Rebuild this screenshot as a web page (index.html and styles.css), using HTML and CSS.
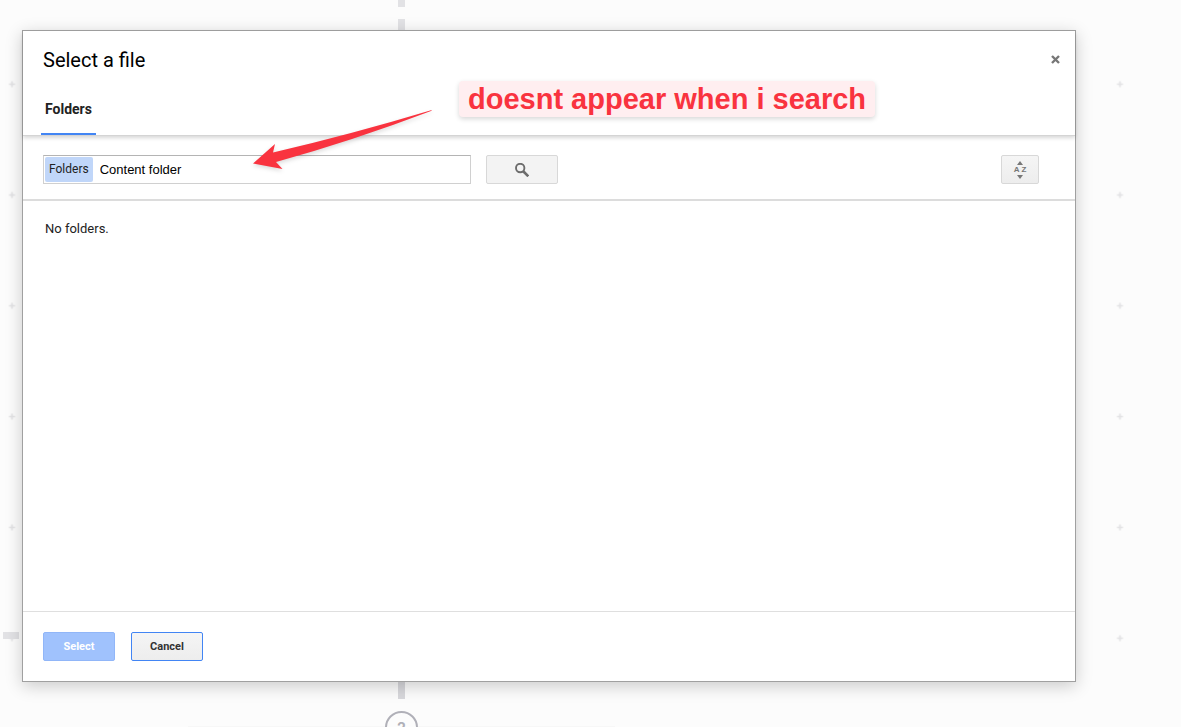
FILE: index.html
```html
<!DOCTYPE html>
<html lang="en">

<head>
  <meta charset="UTF-8">
  <meta name="viewport" content="width=device-width, initial-scale=1.0">
  <title>Select a file</title>
  <link rel="stylesheet" href="styles.css">
</head>

<body>

  <!-- workflow canvas behind the dialog -->
  <div class="canvas">
    <svg class="grid" width="100%" height="100%" aria-hidden="true">
      <defs>
        <pattern id="plus" x="-43.4" y="28.8" width="110.8" height="110.8" patternUnits="userSpaceOnUse">
          <path d="M52.4 55.4h6M55.4 52.4v6" stroke="#e2e2e4" stroke-width="1.6" />
        </pattern>
      </defs>
      <rect width="100%" height="100%" fill="url(#plus)" />
    </svg>
    <div class="dash dash-top"></div>
    <div class="dash dash-upper"></div>
    <div class="dash dash-lower"></div>
    <div class="dash dash-side"></div>
    <div class="step-card"></div>
    <div class="step">2</div>
  </div>

  <div class="dialog" role="dialog" aria-labelledby="dialogTitle">
    <div class="dialog-header">
      <div class="title-row">
        <h1 id="dialogTitle">Select a file</h1>
        <button class="close" aria-label="Close">
          <svg width="9" height="9" viewBox="0 0 9 9"><path d="M1 1l7 7M8 1l-7 7" stroke="#777" stroke-width="2.4" /></svg>
        </button>
      </div>
      <nav class="tabs">
        <a class="tab" href="#folders">Folders</a>
      </nav>
    </div>

    <div class="toolbar">
      <div class="search-box">
        <label class="chip" for="query">Folders</label>
        <input type="text" id="query" value="Content folder">
      </div>
      <button class="tool-btn search-btn" aria-label="Search">
        <svg width="14" height="14" viewBox="0 0 14 14" fill="none" stroke="#6c6c6c">
          <circle cx="5.200" cy="5" r="4.200" stroke-width="1.9" />
          <path d="M8 8l5.300 5.300" stroke-width="2.6" />
        </svg>
      </button>
      <button class="tool-btn sort-btn" aria-label="Sort">
        <svg width="6" height="4" viewBox="0 0 6 4"><path d="M0 4l3-4 3 4z" fill="#777" /></svg>
        <span>A Z</span>
        <svg width="6" height="4" viewBox="0 0 6 4"><path d="M0 0h6l-3 4z" fill="#777" /></svg>
      </button>
    </div>

    <div class="results" id="folders">No folders.</div>

    <div class="dialog-footer">
      <button class="btn btn-select" disabled>Select</button>
      <button class="btn btn-cancel">Cancel</button>
    </div>

    <!-- annotation -->
    <svg class="arrow" width="190" height="66" viewBox="0 0 190 66" aria-hidden="true">
      <path d="M5 58.500L27 39l-2 8.500Q104 29 183 5.200q2 .3 0 .8Q104 36 28 57l6.500 7Z" fill="#f9333f" />
    </svg>
    <div class="note">doesnt appear when i search</div>
  </div>

</body>

</html>
```
FILE: styles.css
```css
* {
  box-sizing: border-box;
}

body {
  margin: 0;
  min-height: 100vh;
  padding: 30px 105px 45px 22px;
  display: flex;
  background: #fcfcfc;
  font-family: Roboto, Arial, sans-serif;
  font-size: 13px;
  color: #222;
}

button,
input {
  font-family: inherit;
}

/* Canvas */
.canvas {
  position: absolute;
  inset: 0;
  overflow: hidden;
}

.grid {
  display: block;
}

.dash {
  position: absolute;
  left: 398px;
  width: 7px;
  background: #e2e2e5;
}

.dash-top {
  top: 0;
  height: 7px;
}

.dash-upper {
  top: 19px;
  height: 12px;
}

.dash-lower {
  top: 682px;
  height: 17px;
  background: #d8d8dc;
}

.dash-side {
  top: 632px;
  left: 3px;
  width: 16px;
  height: 7px;
}

.step-card {
  position: absolute;
  top: 726px;
  left: 188px;
  width: 427px;
  height: 60px;
  background: #f7f7f7;
}

.step {
  position: absolute;
  top: 711px;
  left: 385px;
  width: 33px;
  height: 33px;
  border: 2px solid #b0b0b8;
  border-radius: 50%;
  background: #fcfcfc;
  color: #b0b0b8;
  font-family: Inter, sans-serif;
  font-size: 14px;
  font-weight: bold;
  line-height: 30px;
  text-align: center;
}

/* Dialog */
.dialog {
  position: relative;
  flex: 1;
  display: flex;
  flex-direction: column;
  background: #fff;
  border: 1px solid #a0a0a0;
  box-shadow: 0 4px 16px rgba(0, 0, 0, 0.2);
}

.dialog-header {
  border-bottom: 1px solid #d4d4d4;
  box-shadow: 0 2px 4px rgba(0, 0, 0, 0.16);
}

.title-row {
  display: flex;
  align-items: center;
  justify-content: space-between;
  height: 57px;
  padding: 0 15px 0 20px;
}

h1 {
  margin: 0;
  color: #000;
  font-size: 20px;
  font-weight: normal;
}

.close {
  display: flex;
  padding: 0;
  border: none;
  background: none;
  cursor: pointer;
}

.tabs {
  display: flex;
  padding: 0 18px;
}

.tab {
  height: 47px;
  padding: 0 4px;
  border-bottom: 2px solid #4285f4;
  color: #222;
  font-size: 14px;
  font-weight: bold;
  line-height: 43px;
  text-decoration: none;
}

.toolbar {
  display: flex;
  align-items: center;
  height: 65px;
  padding: 4px 36px 0 20px;
  border-bottom: 2px solid #dcdcdc;
}

.search-box {
  display: flex;
  align-items: center;
  flex: 0 1 428px;
  height: 29px;
  padding: 1px;
  border: 1px solid #d0d0d0;
  border-top-color: #b4b4b4;
}

.chip {
  height: 25px;
  padding: 0 4px;
  border-radius: 2px;
  background: #c0d6f9;
  font-size: 12px;
  line-height: 25px;
}

.search-box input {
  flex: 1;
  min-width: 0;
  padding: 0 7px;
  border: none;
  outline: none;
  background: none;
  color: #000;
  font-family: "Liberation Sans", Arial, sans-serif;
  font-size: 13px;
}

.tool-btn {
  display: flex;
  align-items: center;
  justify-content: center;
  height: 29px;
  padding: 0;
  border: 1px solid #d8d8d8;
  border-radius: 2px;
  background: #f3f3f3;
}

.search-btn {
  width: 72px;
  margin-left: 15px;
}

.sort-btn {
  flex-direction: column;
  gap: 1px;
  width: 38px;
  margin-left: auto;
  background: linear-gradient(#f5f5f5, #ededed);
  color: #777;
  font-family: "Liberation Sans", Arial, sans-serif;
  font-size: 8px;
  font-weight: bold;
  line-height: 8px;
}

.results {
  flex: 1;
  padding: 20px 22px;
  line-height: 16px;
}

.dialog-footer {
  display: flex;
  gap: 16px;
  padding: 20px;
  border-top: 1px solid #dfdfdf;
}

.btn {
  width: 72px;
  height: 29px;
  padding: 0;
  border-radius: 2px;
  font-size: 11px;
  font-weight: bold;
}

.btn-select {
  border: 1px solid #91b6f8;
  background: #a0c2fd;
  color: #fff;
}

.btn-cancel {
  border: 1px solid #4285f4;
  background: linear-gradient(#f5f5f5, #ededed);
  color: #333;
}

/* Annotation */
.arrow {
  position: absolute;
  top: 74px;
  left: 225px;
  filter: drop-shadow(0 2px 2px rgba(0, 0, 0, 0.15));
}

.note {
  position: absolute;
  top: 50px;
  left: 436px;
  height: 36px;
  padding: 0 9px;
  border-radius: 4px;
  background: #ffeef0;
  box-shadow: 0 2px 5px rgba(0, 0, 0, 0.16);
  color: #f9333f;
  font-family: "Liberation Sans", Arial, sans-serif;
  font-size: 29px;
  font-weight: bold;
  line-height: 36px;
  white-space: nowrap;
}
```
